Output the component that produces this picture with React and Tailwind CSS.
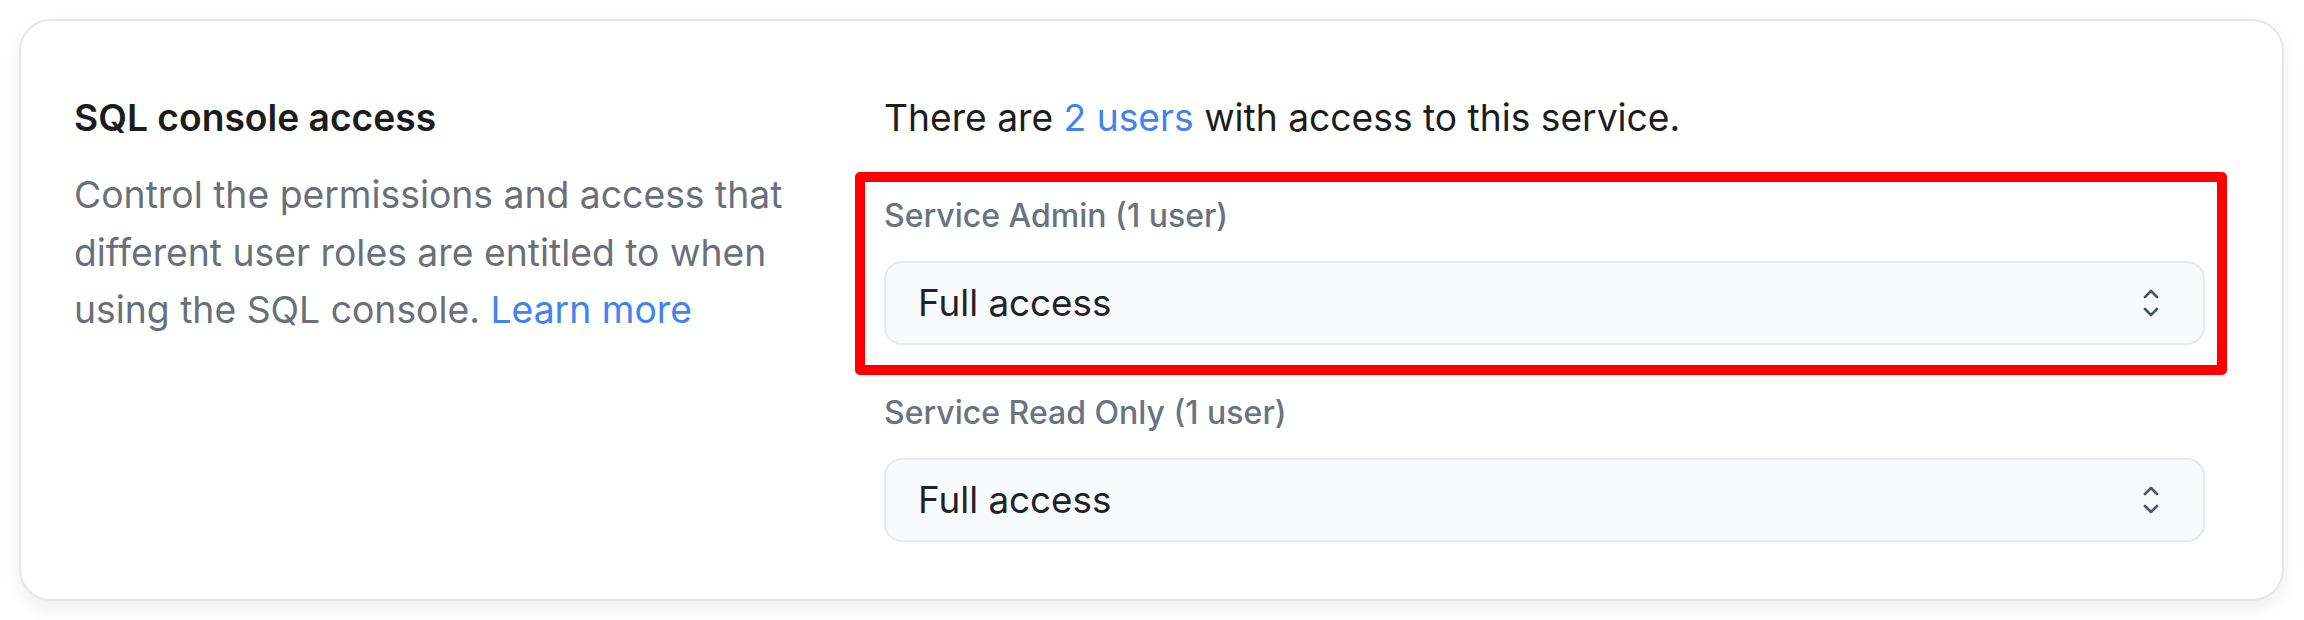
import { useState } from 'react'

const font = { fontFamily: 'Inter, "Noto Sans", sans-serif' }

// Up/down caret used by the native-looking select
function Carets() {
  return (
    <svg width="16" height="28" viewBox="0 0 16 28" fill="none" stroke="#4b5563" strokeWidth="2.6" strokeLinecap="round" strokeLinejoin="round">
      <path d="M2 8 8 2 14 8" />
      <path d="M2 20 8 26 14 20" />
    </svg>
  )
}

function RoleSelect({ label, value }) {
  return (
    <div className="flex flex-col">
      <label className="text-[32px] leading-[44px] font-medium text-[#6b7280]">{label}</label>
      <button className="mt-[23px] flex h-[84px] w-full items-center justify-between rounded-[18px] border-2 border-[#e8e9ec] bg-[#f9fafc] pl-[32px] pr-[44px] text-left">
        <span className="text-[36.8px] text-[#1f2329]">{value}</span>
        <Carets />
      </button>
    </div>
  )
}

export default function App() {
  const [roles] = useState([
    { id: 'admin', label: 'Service Admin (1 user)', value: 'Full access' },
    { id: 'readonly', label: 'Service Read Only (1 user)', value: 'Full access' },
  ])

  return (
    <div className="min-h-[620px] bg-white pl-[19px] pt-[19px] pr-[20px]" style={font}>
      <div className="flex rounded-[32px] border-2 border-[#e7e7e7] bg-white pl-[53px] pr-[77px] pt-[70px] pb-[57px] shadow-[0_8px_18px_rgba(0,0,0,0.07)]">
        {/* left: section title + description */}
        <div className="w-[745px] shrink-0">
          <h2 className="text-[37.2px] leading-[54px] font-semibold text-[#1c1c1c]">SQL console access</h2>
          <p className="mt-[21px] text-[37.3px] leading-[57.5px] text-[#6a6f7a]">
            Control the permissions and access that different user roles are entitled to when using the SQL console.{' '}
            <span className="text-[#4481f1]">Learn more</span>
          </p>
        </div>

        {/* right: per-role access */}
        <div className="ml-[65px] flex-1">
          <p className="text-[37.2px] leading-[54px] text-[#1c1c1c]">
            There are <span className="text-[#4481f1]">2 users</span> with access to this service.
          </p>
          <div className="-ml-[29px] -mr-[22px] mt-[27px] rounded-[5px] border-[10px] border-[#ff0000] pl-[19px] pr-[12px] pt-[12px] pb-[20px]">
            <RoleSelect label={roles[0].label} value={roles[0].value} />
          </div>
          <div className="mt-[16px]">
            <RoleSelect label={roles[1].label} value={roles[1].value} />
          </div>
        </div>
      </div>
    </div>
  )
}
